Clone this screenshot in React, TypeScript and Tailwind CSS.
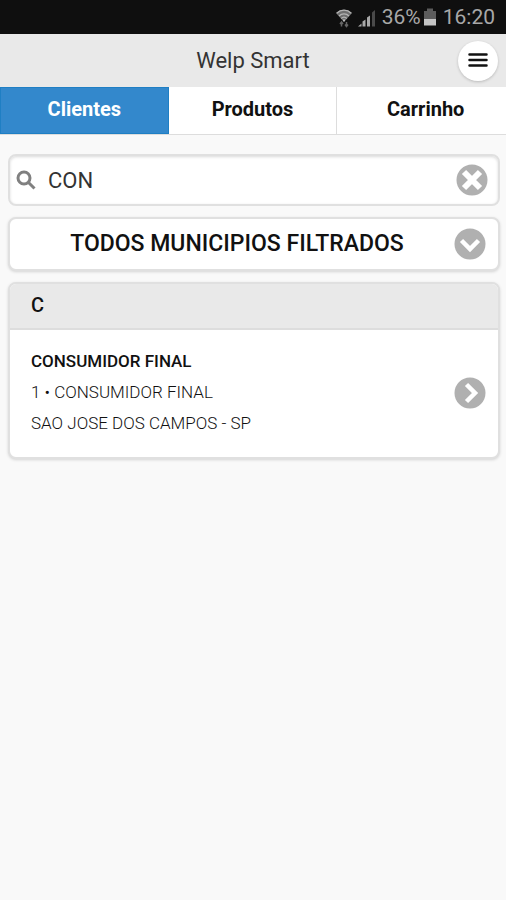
import { useState } from 'react';

interface Cliente {
  id: number;
  nome: string;
  razao: string;
  cidade: string;
}

const tabs = ['Clientes', 'Produtos', 'Carrinho'];

const clientes: Cliente[] = [
  { id: 1, nome: 'CONSUMIDOR FINAL', razao: 'CONSUMIDOR FINAL', cidade: 'SAO JOSE DOS CAMPOS - SP' },
];

function StatusBar() {
  return (
    <div className="flex h-[34px] items-center justify-end bg-[#0f0f0f] pt-px pr-[11px] text-[21px] text-[#a8a8a8]">
      <svg className="mr-1.5 h-5 w-4" viewBox="0 0 16 20">
        <path d="M0 5C4.500.500 11.500.500 16 5L8 14z" fill="#6e6e6e" />
        <g fill="none" stroke="#b4b4b4" strokeWidth="1.300">
          <path d="M.7 5.200c4.200-4 10.400-4 14.600 0" />
          <path d="M3 8c2.900-2.800 7.100-2.800 10 0" />
          <path d="M5.200 10.500c1.600-1.500 4-1.500 5.600 0" />
        </g>
        <path d="M6.500 11.500h3L8 14z" fill="#c4c4c4" />
        <path d="M5.500 18.500V14M4 16l1.500-2L7 16M10.500 14v4.500M9 16.500l1.500 2 1.500-2" fill="none" stroke="#666" strokeWidth="1.500" />
      </svg>
      <svg className="mr-1.5 h-5 w-[18px]" viewBox="0 0 18 20">
        <path d="M0 18.500l3.500-3v3z" fill="#a8a8a8" />
        <path d="M4.500 13.500l3-2v7h-3z" fill="#a8a8a8" />
        <path d="M9 9.500l3-2v11H9z" fill="#a8a8a8" />
        <path d="M14 4.500l3-2.500v16.500h-3z" fill="#4a4a4a" />
      </svg>
      <span>36%</span>
      <svg className="mr-1.5 ml-0.5 h-5 w-[14px]" viewBox="0 0 14 20">
        <path d="M4 .500h6V3h3v8H1V3h3z" fill="#5c5c5c" />
        <path d="M1 11h12v6.500H1z" fill="#c4c4c4" />
      </svg>
      <span>16:20</span>
    </div>
  );
}

function CircleIcon({ type }: { type: 'close' | 'down' | 'right' }) {
  return (
    <svg className="block size-8" viewBox="0 0 32 32" fill="none" stroke="#fff" strokeWidth="4.500">
      <circle cx="16" cy="16" r="15.500" fill="#b0b0b0" stroke="none" />
      {type === 'close' && <path d="M8 8l16 16M24 8l-16 16" strokeWidth="6" />}
      {type === 'down' && <path d="M7.500 12.500l8.500 8.500 8.500-8.500" />}
      {type === 'right' && <path d="M12.500 7.500l8.500 8.500-8.500 8.500" />}
    </svg>
  );
}

export default function App() {
  const [activeTab, setActiveTab] = useState('Clientes');
  const [busca, setBusca] = useState('CON');

  return (
    <div className="min-h-screen bg-[#f9f9f9] font-[Roboto,sans-serif] text-[#111]">
      <StatusBar />

      <header className="grid h-[53px] grid-cols-[1fr_auto_1fr] items-center bg-[#e9e9e9] px-2">
        <h1 className="col-start-2 text-[22px] text-[#333]">Welp Smart</h1>
        <button
          type="button"
          aria-label="Menu"
          className="flex size-10 items-center justify-center justify-self-end rounded-full bg-white shadow-[0_1px_3px_rgba(0,0,0,0.2)]"
        >
          <svg className="h-4 w-5" viewBox="0 0 20 16" stroke="#111" strokeWidth="2.500" strokeLinecap="round">
            <path d="M1.500 1.500h17M1.500 7h17M1.500 12.500h17" />
          </svg>
        </button>
      </header>

      <nav className="grid grid-cols-3 border-b border-[#ddd]">
        {tabs.map(tab => (
          <button
            key={tab}
            type="button"
            onClick={() => setActiveTab(tab)}
            className={
              tab === activeTab
                ? 'h-[47px] border border-[#1f7fc4] bg-[#3388cc] pb-1 text-xl font-bold text-white'
                : 'h-[47px] border-r border-[#ddd] bg-white pb-1 text-xl font-bold last:border-r-0 last:pl-2'
            }
          >
            {tab}
          </button>
        ))}
      </nav>

      <main className="flex flex-col gap-[11px] pt-[19px] pr-1.5 pb-4 pl-2">
        <div className="flex h-[52px] items-center rounded-lg border-2 border-[#e0e0e0] bg-white pr-[10px] pl-1.5 shadow-[inset_0_1px_3px_rgba(0,0,0,0.15)]">
          <svg className="size-5 shrink-0" viewBox="0 0 20 20" fill="none" stroke="#808080" strokeWidth="3">
            <circle cx="8" cy="8" r="6" />
            <path d="M12.500 12.500l6 6" />
          </svg>
          <input
            type="text"
            aria-label="Buscar cliente"
            value={busca}
            onChange={e => setBusca(e.target.value)}
            className="min-w-0 flex-1 px-3 text-[22px] text-[#333] outline-none"
          />
          <button type="button" aria-label="Limpar busca" onClick={() => setBusca('')}>
            <CircleIcon type="close" />
          </button>
        </div>

        <div className="relative">
          <select
            aria-label="Municipios"
            className="block h-[54px] w-full appearance-none rounded-lg border-2 border-[#e0e0e0] bg-white pr-12 pl-3.5 text-center text-[23px] font-medium shadow-[0_1px_3px_rgba(0,0,0,0.15)] outline-none"
          >
            <option>TODOS MUNICIPIOS FILTRADOS</option>
          </select>
          <div className="pointer-events-none absolute inset-y-0 right-3.5 flex items-center">
            <CircleIcon type="down" />
          </div>
        </div>

        <section className="overflow-hidden rounded-lg border-2 border-[#e0e0e0] bg-white shadow-[0_1px_3px_rgba(0,0,0,0.15)]">
          <h2 className="border-b-2 border-[#ddd] bg-[#e9e9e9] px-[21px] pt-1.5 pb-2 text-xl leading-[30px] font-medium">C</h2>
          <ul>
            {clientes.map(cliente => (
              <li key={cliente.id}>
                <a href="#" className="flex items-center justify-between pt-4 pr-3 pb-[18px] pl-[21px]">
                  <div className="text-[17px] leading-[31px] font-light">
                    <h3 className="font-medium">{cliente.nome}</h3>
                    <p>
                      {cliente.id} • {cliente.razao}
                    </p>
                    <p>{cliente.cidade}</p>
                  </div>
                  <CircleIcon type="right" />
                </a>
              </li>
            ))}
          </ul>
        </section>
      </main>
    </div>
  );
}
